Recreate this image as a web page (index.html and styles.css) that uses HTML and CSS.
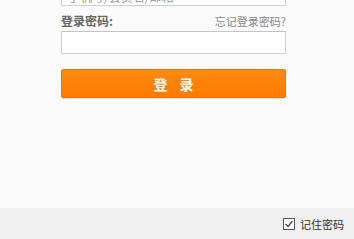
FILE: index.html
```html
<!DOCTYPE html>
<html lang="zh-CN">
<head>
<meta charset="utf-8">
<link rel="stylesheet" href="styles.css">
</head>
<body>
<main class="login">
  <input class="field field-user" type="text" placeholder="手机号/会员名/邮箱">
  <div class="label-row">
    <span class="label">登录密码:</span>
    <a class="forgot" href="#">忘记登录密码?</a>
  </div>
  <input class="field field-pass" type="password">
  <button class="submit" type="button"><span>登</span><span>录</span></button>
</main>
<footer class="footer">
  <label class="remember">
    <svg class="check" width="12" height="12" viewBox="0 0 12 12">
      <rect x="0.5" y="0.5" width="11" height="11" fill="#fff" stroke="#555"/>
      <path d="M2.5 6 L5 8.5 L9.5 3" fill="none" stroke="#444" stroke-width="1.2"/>
    </svg>
    <span>记住密码</span>
  </label>
</footer>
</body>
</html>
```

FILE: styles.css
```css
html, body {
  margin: 0;
  padding: 0;
}
body {
  width: 354px;
  height: 239px;
  overflow: hidden;
  background: #fafafa;
  display: flex;
  flex-direction: column;
  font-family: "Noto Sans CJK SC", "Liberation Sans", sans-serif;
}
.login {
  margin: -17px 0 0 61px;
  width: 225px;
  display: flex;
  flex-direction: column;
}
.field {
  box-sizing: border-box;
  width: 225px;
  height: 23px;
  margin: 0;
  border: 1px solid #cfcfcf;
  border-top-color: #c4c4c4;
  background: #fff;
  font-family: inherit;
  font-size: 12px;
  padding: 4px 6px 0;
  outline: none;
}
.field::placeholder {
  color: #9a9a9a;
}
.label-row {
  margin-top: 7px;
  height: 16px;
  display: flex;
  justify-content: space-between;
  align-items: center;
}
.label {
  font-size: 12px;
  font-weight: bold;
  color: #666;
  line-height: 16px;
}
.forgot {
  font-size: 11px;
  color: #888;
  text-decoration: none;
  line-height: 16px;
}
.field-pass {
  margin-top: 2px;
}
.submit {
  margin-top: 15px;
  box-sizing: border-box;
  width: 225px;
  height: 29px;
  border: 1px solid #f27400;
  border-radius: 2px;
  background: linear-gradient(#ff8a10, #ff7a00);
  box-shadow: 0 1px 1px rgba(0,0,0,0.12);
  color: #fff;
  font-family: inherit;
  font-size: 14px;
  font-weight: bold;
  display: flex;
  justify-content: center;
  align-items: center;
  gap: 12px;
  padding: 0;
}
.footer {
  margin-top: auto;
  height: 31px;
  background: #f0f0f0;
  display: flex;
  justify-content: flex-end;
  align-items: center;
  padding-right: 10px;
}
.remember {
  display: flex;
  align-items: center;
  gap: 5px;
  font-size: 11px;
  color: #333;
}
.check {
  display: block;
}
```
